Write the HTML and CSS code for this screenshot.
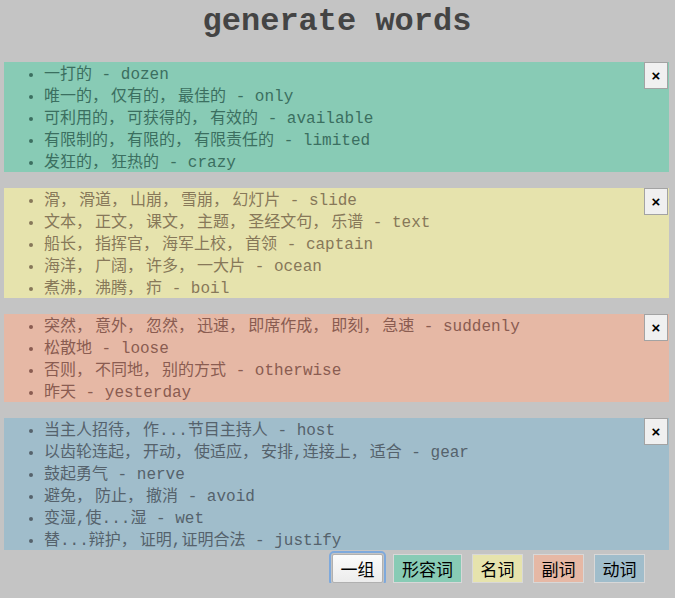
FILE: index.html
```html
<!DOCTYPE html>
<html lang="zh">
<head>
<meta charset="utf-8">
<title>generate words</title>
<link rel="stylesheet" href="styles.css">
</head>
<body>
<h1 class="title">generate words</h1>
<div class="groups">
  <div class="group group-adj">
    <ul class="word-list">
      <li>一打的 - dozen</li>
      <li>唯一的<span class="sep">，</span>仅有的<span class="sep">，</span>最佳的 - only</li>
      <li>可利用的<span class="sep">，</span>可获得的<span class="sep">，</span>有效的 - available</li>
      <li>有限制的<span class="sep">，</span>有限的<span class="sep">，</span>有限责任的 - limited</li>
      <li>发狂的<span class="sep">，</span>狂热的 - crazy</li>
    </ul>
    <button class="close">×</button>
  </div>
  <div class="group group-noun">
    <ul class="word-list">
      <li>滑<span class="sep">，</span>滑道<span class="sep">，</span>山崩<span class="sep">，</span>雪崩<span class="sep">，</span>幻灯片 - slide</li>
      <li>文本<span class="sep">，</span>正文<span class="sep">，</span>课文<span class="sep">，</span>主题<span class="sep">，</span>圣经文句<span class="sep">，</span>乐谱 - text</li>
      <li>船长<span class="sep">，</span>指挥官<span class="sep">，</span>海军上校<span class="sep">，</span>首领 - captain</li>
      <li>海洋<span class="sep">，</span>广阔<span class="sep">，</span>许多<span class="sep">，</span>一大片 - ocean</li>
      <li>煮沸<span class="sep">，</span>沸腾<span class="sep">，</span>疖 - boil</li>
    </ul>
    <button class="close">×</button>
  </div>
  <div class="group group-adv">
    <ul class="word-list">
      <li>突然<span class="sep">，</span>意外<span class="sep">，</span>忽然<span class="sep">，</span>迅速<span class="sep">，</span>即席作成<span class="sep">，</span>即刻<span class="sep">，</span>急速 - suddenly</li>
      <li>松散地 - loose</li>
      <li>否则<span class="sep">，</span>不同地<span class="sep">，</span>别的方式 - otherwise</li>
      <li>昨天 - yesterday</li>
    </ul>
    <button class="close">×</button>
  </div>
  <div class="group group-verb">
    <ul class="word-list">
      <li>当主人招待<span class="sep">，</span>作...节目主持人 - host</li>
      <li>以齿轮连起<span class="sep">，</span>开动<span class="sep">，</span>使适应<span class="sep">，</span>安排,连接上<span class="sep">，</span>适合 - gear</li>
      <li>鼓起勇气 - nerve</li>
      <li>避免<span class="sep">，</span>防止<span class="sep">，</span>撤消 - avoid</li>
      <li>变湿,使...湿 - wet</li>
      <li>替...辩护<span class="sep">，</span>证明,证明合法 - justify</li>
    </ul>
    <button class="close">×</button>
  </div>
</div>
<div class="toolbar">
  <button class="tab tab-all">一组</button>
  <button class="tab tab-adj">形容词</button>
  <button class="tab tab-noun">名词</button>
  <button class="tab tab-adv">副词</button>
  <button class="tab tab-verb">动词</button>
</div>
</body>
</html>
```

FILE: styles.css
```css
html, body {
  margin: 0;
  background: #c4c4c4;
}
body {
  padding: 0 6px 0 4px;
  font-family: "Liberation Mono", "Noto Sans CJK SC", monospace;
}
.title {
  margin: 4px 0 22px;
  padding-left: 1px;
  font-family: "Liberation Mono", monospace;
  font-size: 32px;
  line-height: 36px;
  font-weight: bold;
  color: #444;
  text-align: center;
}
.groups {
  display: flex;
  flex-direction: column;
  gap: 16px;
}
.group {
  position: relative;
}
.word-list {
  margin: 0;
  padding: 0 0 0 40px;
  list-style: disc;
  font-size: 16px;
}
.word-list li {
  height: 22px;
  line-height: 26px;
}
.sep {
  margin-right: 3px;
}
.group-adj { background: #88cbb5; color: #3b6f60; }
.group-noun { background: #e6e3ad; color: #877859; }
.group-adv { background: #e6b8a5; color: #8a5c51; }
.group-verb { background: #a0bdcb; color: #55626c; }
.close {
  position: absolute;
  top: 0;
  right: 1px;
  width: 24px;
  height: 27px;
  padding: 0;
  border: 1px solid #a3a3a3;
  background: #f0f0f0;
  color: #000;
  font-family: "Liberation Sans", sans-serif;
  font-size: 15px;
  font-weight: bold;
  line-height: 1;
}
.toolbar {
  display: flex;
  justify-content: flex-end;
  gap: 10px;
  margin-top: 4px;
  padding-right: 24px;
}
.tab {
  box-sizing: border-box;
  height: 29px;
  padding: 0;
  border: 1px solid #d8d8d8;
  font-family: "Noto Sans CJK SC", sans-serif;
  font-size: 17px;
  line-height: 25px;
  color: #000;
}
.tab-all, .tab-noun, .tab-adv, .tab-verb { width: 51px; }
.tab-adj { width: 69px; }
.tab-all {
  background: linear-gradient(#fbfbfb, #ececec);
  border-color: #b0b0b0;
  border-radius: 2px;
  outline: 2px solid #7ea9dc;
  outline-offset: 1px;
}
.tab-adj { background: #88cbb5; }
.tab-noun { background: #e6e3ad; }
.tab-adv { background: #e6b8a5; }
.tab-verb { background: #a0bdcb; }
```
